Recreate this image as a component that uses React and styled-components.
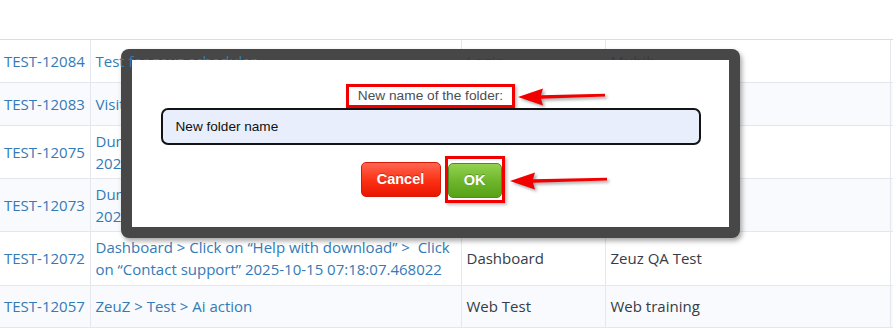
import React from 'react'
import styled, { createGlobalStyle } from 'styled-components'

const colors = {
  link: '#337ab7',
  text: '#353c47',
  line: '#e4e8ee',
  stripe: '#f8fafd',
  frame: '#474747',
  red: '#f20000'
}

const rows = [
  { id: 'TEST-12084', title: ['Test for zeuz scheduler'], feature: 'Login', owner: 'Mubib', h: 42 },
  { id: 'TEST-12083', title: ['Visit google'], feature: 'Web Test', owner: '', h: 43 },
  { id: 'TEST-12075', title: ['Dummy test case', '2025-10-15 07:18:07.468022'], feature: 'Dashboard', owner: '', h: 53 },
  { id: 'TEST-12073', title: ['Dummy test case', '2025-10-15 07:18:07.468022'], feature: 'Dashboard', owner: '', h: 53 },
  {
    id: 'TEST-12072',
    title: ['Dashboard > Click on \u201cHelp with download\u201d >  Click', 'on \u201cContact support\u201d 2025-10-15 07:18:07.468022'],
    feature: 'Dashboard',
    owner: 'Zeuz QA Test',
    h: 54
  },
  { id: 'TEST-12057', title: ['ZeuZ > Test > Ai action'], feature: 'Web Test', owner: 'Web training', h: 42 }
]

const GlobalStyle = createGlobalStyle`
  html, body {
    margin: 0;
    padding: 0;
    background: #ffffff;
    overflow: hidden;
  }
  body {
    font-family: "Open Sans", "Liberation Sans", sans-serif;
  }
`

const Page = styled.div`
  position: relative;
  width: 893px;
  height: 329px;
  overflow: hidden;
  background: #ffffff;
`

const TopBar = styled.div`
  height: 39px;
  border-bottom: 1px solid #d9dce1;
  box-shadow: 0 1px 1px rgba(0, 0, 0, 0.05);
`

const Table = styled.table`
  width: 1000px;
  border-collapse: collapse;
  table-layout: fixed;
  font-size: 15px;
  line-height: 22px;
`

const Row = styled.tr`
  height: ${p => p.$h}px;
  background: ${p => (p.$striped ? colors.stripe : '#ffffff')};
`

const Cell = styled.td`
  padding: 0 5px;
  vertical-align: middle;
  border-bottom: 1px solid ${colors.line};
  border-right: 1px solid ${colors.line};
  color: ${p => (p.$link ? colors.link : colors.text)};
  white-space: pre;
  overflow: hidden;
  &:first-child {
    padding-left: 4px;
  }
`

// the first row's text shows through over the dark frame in the screenshot
const Line = styled.div`
  position: relative;
  z-index: ${p => (p.$over ? 2 : 'auto')};
`

const Frame = styled.div`
  position: absolute;
  left: 121px;
  top: 49px;
  padding: 11px;
  border-radius: 8px;
  background: ${colors.frame};
  box-shadow: 2px 3px 5px rgba(0, 0, 0, 0.35);
`

const Panel = styled.div`
  position: relative;
  z-index: 3;
  width: 597px;
  height: 143px;
  padding-top: 24px;
  background: #ffffff;
  display: flex;
  flex-direction: column;
  align-items: center;
  font-family: "Liberation Sans", Arial, sans-serif;
`

const Label = styled.div`
  height: 18px;
  padding: 0 9px;
  border: 3px solid ${colors.red};
  box-shadow: 2px 2px 3px rgba(0, 0, 0, 0.25);
  font-size: 13.7px;
  line-height: 18px;
  color: #4a4f57;
  white-space: nowrap;
`

const Input = styled.div`
  width: 523px;
  height: 33px;
  border: 2px solid #141414;
  border-radius: 7px;
  background: #e8eefb;
  padding-left: 13px;
  font-size: 13.6px;
  line-height: 33px;
  color: #111111;
`

const Buttons = styled.div`
  display: flex;
  align-items: center;
  gap: 4px;
  margin-top: 11px;
  margin-left: 4px;
`

const Button = styled.div`
  height: 33px;
  width: ${p => p.$w}px;
  border-radius: 5px;
  border: 1px solid ${p => (p.$ok ? '#4b8d1e' : '#d41a05')};
  background: ${p =>
    p.$ok
      ? 'linear-gradient(180deg, #93d150 0%, #6cb42a 55%, #58a218 100%)'
      : 'linear-gradient(180deg, #ff6650 0%, #fb2f14 55%, #ea1600 100%)'};
  color: #ffffff;
  font-weight: bold;
  font-size: 14.5px;
  line-height: 33px;
  text-align: center;
  text-shadow: 0 -1px 0 rgba(0, 0, 0, 0.25);
`

const Marked = styled.div`
  border: 3px solid ${colors.red};
  padding: 4px 0 2px 0;
  box-shadow: 2px 2px 3px rgba(0, 0, 0, 0.25);
`

const Arrow = styled.svg`
  position: absolute;
  z-index: 4;
  left: ${p => p.$x}px;
  top: ${p => p.$y}px;
  overflow: visible;
  filter: drop-shadow(2px 2px 1.5px rgba(0, 0, 0, 0.35));
`

const ArrowLeft = ({ x, y, len }) => (
  <Arrow $x={x} $y={y} width={len} height={20} viewBox={`0 0 ${len} 20`}>
    <polygon
      points={`0,10 25,1.5 23,8.3 ${len},6.8 ${len},9.6 23,11.8 25,18.5`}
      fill={colors.red}
    />
  </Arrow>
)

const App = () => (
  <Page>
    <GlobalStyle />
    <TopBar />
    <Table>
      <colgroup>
        <col style={{ width: 90 }} />
        <col style={{ width: 371 }} />
        <col style={{ width: 144 }} />
        <col style={{ width: 285 }} />
        <col />
      </colgroup>
      <tbody>
        {rows.map((r, i) => (
          <Row key={r.id} $h={r.h} $striped={i % 2 === 1}>
            <Cell $link>{r.id}</Cell>
            <Cell $link>
              {r.title.map(line => (
                <Line key={line} $over={i === 0}>{line}</Line>
              ))}
            </Cell>
            <Cell>
              <Line $over={i === 0}>{r.feature}</Line>
            </Cell>
            <Cell>
              <Line $over={i === 0}>{r.owner}</Line>
            </Cell>
            <Cell />
          </Row>
        ))}
      </tbody>
    </Table>

    <Frame>
      <Panel>
        <Label>New name of the folder:</Label>
        <Input>New folder name</Input>
        <Buttons>
          <Button $w={78}>Cancel</Button>
          <Marked>
            <Button $ok $w={52}>OK</Button>
          </Marked>
        </Buttons>
      </Panel>
    </Frame>

    <ArrowLeft x={518} y={87} len={87} />
    <ArrowLeft x={510} y={171} len={97} />
  </Page>
)

export default App
